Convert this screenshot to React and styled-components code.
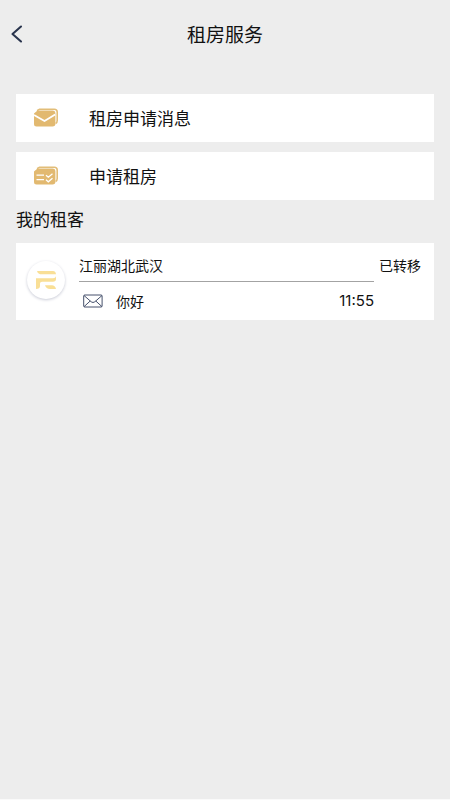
import React from "react";
import styled, { createGlobalStyle } from "styled-components";

const GlobalStyle = createGlobalStyle`
  * {
    box-sizing: border-box;
  }

  body {
    background-color: #ededed;
    color: #111;
    font-family: "Noto Sans CJK SC", sans-serif;
    margin: 0;
  }
`;

const Page = styled.div`
  border-bottom: 1px solid #fafafa;
  min-height: 100vh;
  width: 100%;
`;

const Header = styled.header`
  align-items: center;
  display: grid;
  grid-template-columns: 48px 1fr 48px;
  height: 68px;
`;

const BackButton = styled.button`
  background: none;
  border: 0;
  cursor: pointer;
  display: flex;
  height: 40px;
  padding: 11px 10px;
`;

const Title = styled.h1`
  font-size: 19px;
  font-weight: 400;
  line-height: 28px;
  margin: 0;
  text-align: center;
`;

const Content = styled.main`
  padding: 26px 16px;
`;

const Menu = styled.nav`
  display: flex;
  flex-flow: column;
  gap: 10px;
`;

const MenuItem = styled.button`
  align-items: center;
  background-color: #fff;
  border: 0;
  color: inherit;
  cursor: pointer;
  display: flex;
  font-family: inherit;
  font-size: 17px;
  gap: 30px;
  height: 48px;
  line-height: 24px;
  padding: 0 17px;
  text-align: left;
  width: 100%;
`;

const SectionTitle = styled.h2`
  font-size: 17px;
  font-weight: 400;
  line-height: 24px;
  margin: 7px 0 12px;
`;

const TenantCard = styled.article`
  background-color: #fff;
  display: flex;
  padding: 8px 13px 0 11px;
`;

const Avatar = styled.div`
  align-items: center;
  background-color: #fff;
  border-radius: 50%;
  box-shadow: 0 1px 3px #c9cbd6;
  display: flex;
  flex: none;
  height: 38px;
  justify-content: center;
  margin: 10px 14px 0 0;
  width: 38px;
`;

const TenantInfo = styled.div`
  flex: 1;
  font-size: 14px;
  line-height: 28px;
  min-width: 0;
`;

const TenantName = styled.div`
  border-bottom: 1px solid #a3a3a3;
  height: 31px;
`;

const Message = styled.div`
  align-items: center;
  display: flex;
  height: 38px;
  padding-left: 4px;
`;

const MessageText = styled.span`
  flex: 1;
  padding-left: 13px;
`;

const Time = styled.time`
  font-family: Inter, sans-serif;
  font-size: 15px;
`;

const Status = styled.span`
  font-size: 14px;
  line-height: 28px;
  padding-left: 5px;
`;

const BackIcon = () => (
  <svg width="14" height="18" viewBox="0 0 14 18" fill="none" aria-hidden="true">
    <path
      d="M11 1.5L2.5 9L11 16.5"
      stroke="#29344d"
      strokeWidth="2.1"
      strokeLinecap="round"
      strokeLinejoin="round"
    />
  </svg>
);

const CardStack = () => (
  <>
    <path
      d="M4 2.6L6.5 1.2H21.3Q24.2 1.2 24.2 4V12.5Q24.2 14.8 22.6 15.5"
      stroke="#e2bd78"
      strokeWidth="1.6"
    />
    <path
      d="M4.5 2.6H19.5Q22.4 2.6 22.4 5.5V15.8Q22.4 18.5 19.5 18.5H3.5Q1 18.5 1 16V5.6Z"
      fill="#e2b970"
    />
  </>
);

const MessagesIcon = () => (
  <svg width="26" height="20" viewBox="0 0 26 20" fill="none" aria-hidden="true">
    <CardStack />
    <path
      d="M1 7L11.5 13L22.2 6.5"
      stroke="#fff"
      strokeWidth="1.8"
      strokeLinejoin="round"
    />
  </svg>
);

const ApplyIcon = () => (
  <svg width="26" height="20" viewBox="0 0 26 20" fill="none" aria-hidden="true">
    <CardStack />
    <path
      d="M3.5 9.2H11M3.5 13.7H11M13 9.2L15.3 11.2L19.5 7.7M13 13.8L15.3 15.8L19.5 12.3"
      stroke="#fff"
      strokeWidth="1.3"
    />
  </svg>
);

const LogoIcon = () => (
  <svg width="22" height="20" viewBox="0 0 22 20" fill="#f9df96" aria-hidden="true">
    <path d="M2 1H18Q20.5 1 21 4.3H5Q2.5 4 2 1Z" />
    <path d="M1 8.3H18Q21 8.3 21 5.5V9Q21 11.7 18 11.7H7Q5 11.7 5 13.5V16Q5 19 1 19V12Z" />
    <path d="M10 15.3H17Q20 15.3 21 19H15Q11 19 10 15.3Z" />
  </svg>
);

const MailIcon = () => (
  <svg width="20" height="14" viewBox="0 0 20 14" fill="none" stroke="#46516c" aria-hidden="true">
    <rect x="0.7" y="1" width="18.4" height="12" rx="1" />
    <path d="M1 1.5L8.2 7.8Q10 9.2 11.8 7.8L19 1.5M1 12.7L7.2 7M19 12.7L12.8 7" />
  </svg>
);

const menuItems = [
  { label: "租房申请消息", icon: <MessagesIcon /> },
  { label: "申请租房", icon: <ApplyIcon /> },
];

const tenants = [
  { name: "江丽湖北武汉", message: "你好", time: "11:55", status: "已转移" },
];

const App = () => (
  <Page>
    <GlobalStyle />
    <Header>
      <BackButton type="button" aria-label="返回">
        <BackIcon />
      </BackButton>
      <Title>租房服务</Title>
    </Header>
    <Content>
      <Menu>
        {menuItems.map((item) => (
          <MenuItem type="button" key={item.label}>
            {item.icon}
            {item.label}
          </MenuItem>
        ))}
      </Menu>
      <SectionTitle>我的租客</SectionTitle>
      {tenants.map((tenant) => (
        <TenantCard key={tenant.name}>
          <Avatar>
            <LogoIcon />
          </Avatar>
          <TenantInfo>
            <TenantName>{tenant.name}</TenantName>
            <Message>
              <MailIcon />
              <MessageText>{tenant.message}</MessageText>
              <Time>{tenant.time}</Time>
            </Message>
          </TenantInfo>
          <Status>{tenant.status}</Status>
        </TenantCard>
      ))}
    </Content>
  </Page>
);

export default App;
